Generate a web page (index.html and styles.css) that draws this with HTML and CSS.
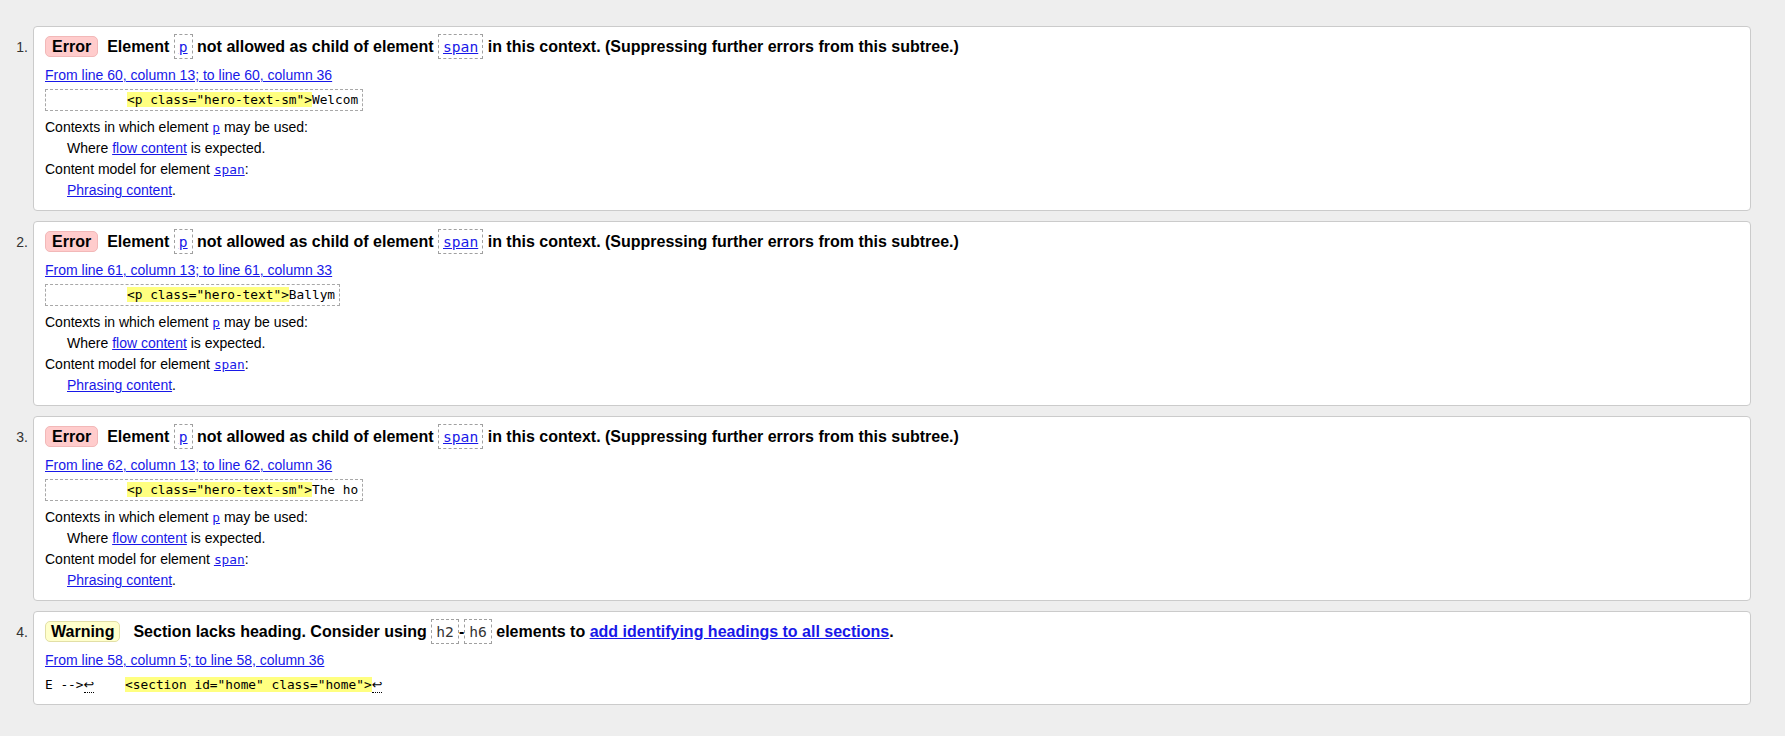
FILE: index.html
```html
<!DOCTYPE html>
<html lang="en">
<head>
<meta charset="utf-8">
<title>Nu Html Checker results</title>
<link rel="stylesheet" href="styles.css">
</head>
<body>
<ol class="messages">
  <li class="msg">
    <span class="num">1.</span>
    <div class="card">
      <p class="title"><strong class="badge badge-error">Error</strong><span>Element <code class="box"><a href="#">p</a></code> not allowed as child of element <code class="box"><a href="#">span</a></code> in this context. (Suppressing further errors from this subtree.)</span></p>
      <p class="location"><a href="#">From line 60, column 13; to line 60, column 36</a></p>
      <p class="extract"><code class="extract-box">          <b>&lt;p class="hero-text-sm"&gt;</b>Welcom</code></p>
      <dl class="details">
        <dt>Contexts in which element <a href="#"><code>p</code></a> may be used:</dt>
        <dd>Where <a href="#">flow content</a> is expected.</dd>
        <dt>Content model for element <a href="#"><code>span</code></a>:</dt>
        <dd><a href="#">Phrasing content</a>.</dd>
      </dl>
    </div>
  </li>
  <li class="msg">
    <span class="num">2.</span>
    <div class="card">
      <p class="title"><strong class="badge badge-error">Error</strong><span>Element <code class="box"><a href="#">p</a></code> not allowed as child of element <code class="box"><a href="#">span</a></code> in this context. (Suppressing further errors from this subtree.)</span></p>
      <p class="location"><a href="#">From line 61, column 13; to line 61, column 33</a></p>
      <p class="extract"><code class="extract-box">          <b>&lt;p class="hero-text"&gt;</b>Ballym</code></p>
      <dl class="details">
        <dt>Contexts in which element <a href="#"><code>p</code></a> may be used:</dt>
        <dd>Where <a href="#">flow content</a> is expected.</dd>
        <dt>Content model for element <a href="#"><code>span</code></a>:</dt>
        <dd><a href="#">Phrasing content</a>.</dd>
      </dl>
    </div>
  </li>
  <li class="msg">
    <span class="num">3.</span>
    <div class="card">
      <p class="title"><strong class="badge badge-error">Error</strong><span>Element <code class="box"><a href="#">p</a></code> not allowed as child of element <code class="box"><a href="#">span</a></code> in this context. (Suppressing further errors from this subtree.)</span></p>
      <p class="location"><a href="#">From line 62, column 13; to line 62, column 36</a></p>
      <p class="extract"><code class="extract-box">          <b>&lt;p class="hero-text-sm"&gt;</b>The ho</code></p>
      <dl class="details">
        <dt>Contexts in which element <a href="#"><code>p</code></a> may be used:</dt>
        <dd>Where <a href="#">flow content</a> is expected.</dd>
        <dt>Content model for element <a href="#"><code>span</code></a>:</dt>
        <dd><a href="#">Phrasing content</a>.</dd>
      </dl>
    </div>
  </li>
  <li class="msg">
    <span class="num">4.</span>
    <div class="card">
      <p class="title"><strong class="badge badge-warning">Warning</strong><span>Section lacks heading. Consider using <code class="box">h2</code>-<code class="box">h6</code> elements to <a href="#">add identifying headings to all sections</a>.</span></p>
      <p class="location"><a href="#">From line 58, column 5; to line 58, column 36</a></p>
      <p class="extract"><code class="extract-plain">E --&gt;<span class="lf" title="Line break">↩</span>    <b>&lt;section id="home" class="home"&gt;</b><span class="lf" title="Line break">↩</span></code></p>
    </div>
  </li>
</ol>
</body>
</html>
```

FILE: styles.css
```css
html, body {
  margin: 0;
  padding: 0;
}

body {
  background: #eeeeee;
  color: #000;
  font-family: "Liberation Sans", Arial, sans-serif;
  font-size: 14px;
}

a {
  color: #1818e8;
  text-decoration: underline;
}

.messages {
  list-style: none;
  margin: 0;
  padding: 26px 34px 0 0;
  display: flex;
  flex-direction: column;
  gap: 10px;
}

.msg {
  display: flex;
  align-items: baseline;
}

.num {
  flex: 0 0 28px;
  width: 28px;
  padding-right: 5px;
  text-align: right;
  color: #333;
  font-size: 14px;
}

.card {
  flex: 1;
  background: #fff;
  border: 1px solid #cbcbcb;
  border-radius: 4px;
  padding: 8px 11px 9px 11px;
}

.card p {
  margin: 0;
}

.title {
  font-size: 16px;
  font-weight: bold;
  line-height: 24px;
}

.badge {
  display: inline-block;
  line-height: 19px;
  padding: 0 6px;
  border-radius: 5px;
  font-weight: bold;
}

.badge-error {
  background: #ffcccc;
  border: 1px solid #f2b8b8;
  margin-right: 9px;
}

.badge-warning {
  background: #ffffcc;
  border: 1px solid #e2dfa6;
  padding: 0 5px;
  margin-right: 13px;
}

code {
  font-family: "DejaVu Sans Mono", "Liberation Mono", monospace;
  font-size: 0.915em;
  font-weight: normal;
}

.box {
  border: 1px dashed #a0a0a0;
  padding: 3px 4px;
  color: #333;
}

.location {
  margin-top: 6px !important;
  line-height: 20px;
}

.extract {
  margin-top: 4px !important;
  line-height: 20px;
}

.extract code {
  font-size: 12.8px;
  white-space: pre;
  line-height: 20px;
}

.extract-box {
  display: inline-block;
  border: 1px dashed #a8a8a8;
  padding: 0 4px;
}

.extract b {
  font-weight: normal;
  background: #ffff80;
}

.lf {
  font-family: "DejaVu Sans", sans-serif;
  font-size: 12.8px;
  border-bottom: 1px dotted #000;
}

.details {
  margin: 6px 0 0 0;
  line-height: 21px;
}

.details dt {
  margin: 0;
}

.details dd {
  margin: 0 0 0 22px;
}

.details code {
  font-size: 12.8px;
}
```
